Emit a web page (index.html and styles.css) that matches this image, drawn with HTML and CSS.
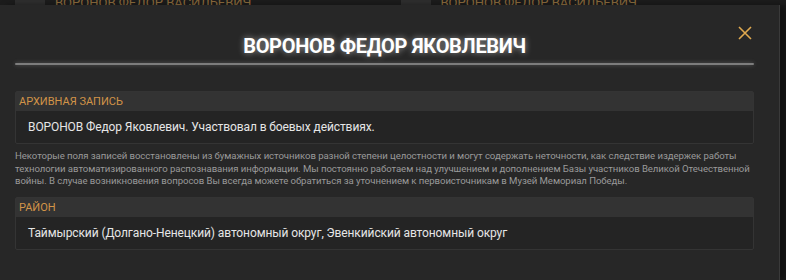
FILE: index.html
```html
<!DOCTYPE html>
<html lang="ru">
<head>
<meta charset="utf-8">
<link rel="stylesheet" href="styles.css">
</head>
<body>
<div class="backdrop">
  <div class="bg-row">
    <div class="bg-item"><span class="bg-thumb"></span><span class="bg-name">ВОРОНОВ ФЕДОР ВАСИЛЬЕВИЧ</span></div>
    <div class="bg-item"><span class="bg-thumb"></span><span class="bg-name">ВОРОНОВ ФЕДОР ВАСИЛЬЕВИЧ</span></div>
  </div>
</div>
<div class="modal">
  <div class="modal-head">
    <h1 class="title">ВОРОНОВ ФЕДОР ЯКОВЛЕВИЧ</h1>
    <button class="close" aria-label="Закрыть">
      <svg width="14" height="14" viewBox="0 0 14 14"><path d="M1 1L13 13M13 1L1 13" stroke="#e0a94f" stroke-width="1.6" fill="none"/></svg>
    </button>
  </div>
  <div class="rule"></div>
  <div class="section first">
    <div class="section-head">АРХИВНАЯ ЗАПИСЬ</div>
    <div class="section-body">ВОРОНОВ Федор Яковлевич. Участвовал в боевых действиях.</div>
  </div>
  <p class="note">Некоторые поля записей восстановлены из бумажных источников разной степени целостности и могут содержать неточности, как следствие издержек работы технологии автоматизированного распознавания информации. Мы постоянно работаем над улучшением и дополнением Базы участников Великой Отечественной войны. В случае возникновения вопросов Вы всегда можете обратиться за уточнением к первоисточникам в Музей Мемориал Победы.</p>
  <div class="section">
    <div class="section-head">РАЙОН</div>
    <div class="section-body">Таймырский (Долгано-Ненецкий) автономный округ, Эвенкийский автономный округ</div>
  </div>
  <div class="next-box"></div>
</div>
</body>
</html>
```
FILE: styles.css
```css
html, body {
  margin: 0;
  padding: 0;
  background: #1a1a1a;
  overflow: hidden;
  height: 280px;
}
body {
  font-family: Roboto, "Noto Sans", sans-serif;
}
.backdrop {
  height: 5px;
  overflow: hidden;
  background: #1c1c1c;
}
.bg-row {
  display: flex;
  padding-left: 15px;
}
.bg-item {
  display: flex;
  align-items: flex-start;
  gap: 10px;
  width: 395px;
  height: 5px;
}
.bg-thumb {
  width: 30px;
  height: 5px;
  background: #2e2e2e;
}
.bg-name {
  font-size: 13px;
  line-height: 5px;
  color: #8a6a3c;
}
.modal {
  width: 739px;
  height: 275px;
  overflow: hidden;
  background: #272727;
  border-right: 1px solid #3a3a3a;
  padding: 0 25px 0 15px;
  box-shadow: 6px 0 6px rgba(0,0,0,0.35);
  position: relative;
}
.modal-head {
  height: 53px;
  padding-bottom: 5px;
  display: flex;
  align-items: flex-end;
  justify-content: center;
  position: relative;
}
.title {
  margin: 0;
  font-family: Roboto, "DejaVu Sans", sans-serif;
  font-weight: bold;
  font-size: 20px;
  line-height: 23px;
  color: #ffffff;
  letter-spacing: -0.3px;
  text-shadow: 0 0 6px rgba(255,255,255,0.55);
}
.close {
  position: absolute;
  right: 2px;
  top: 21px;
  width: 14px;
  height: 14px;
  padding: 0;
  border: 0;
  background: none;
  display: flex;
}
.rule {
  height: 2px;
  background: #7d7d7d;
  box-shadow: 0 0 4px rgba(200,200,200,0.35);
  border-radius: 1px;
}
.section.first {
  margin-top: 26px;
}
.section {
  border: 1px solid #343434;
  border-radius: 2px;
  background: #242424;
}
.section-head {
  height: 19px;
  line-height: 19px;
  background: #333333;
  color: #d29448;
  font-size: 11px;
  padding-left: 3px;
}
.section-body {
  height: 32px;
  line-height: 32px;
  font-size: 12px;
  letter-spacing: -0.1px;
  color: #e6e6e6;
  padding-left: 12px;
}
.note {
  margin: 6px 0 9px;
  font-size: 9.6px;
  line-height: 12.5px;
  letter-spacing: -0.06px;
  color: #9a9a9a;
}
.section + .next-box {
  margin-top: 32px;
}
.next-box {
  height: 10px;
  border-top: 2px solid #6e6e6e;
  background: #2a2a2a;
}
```
